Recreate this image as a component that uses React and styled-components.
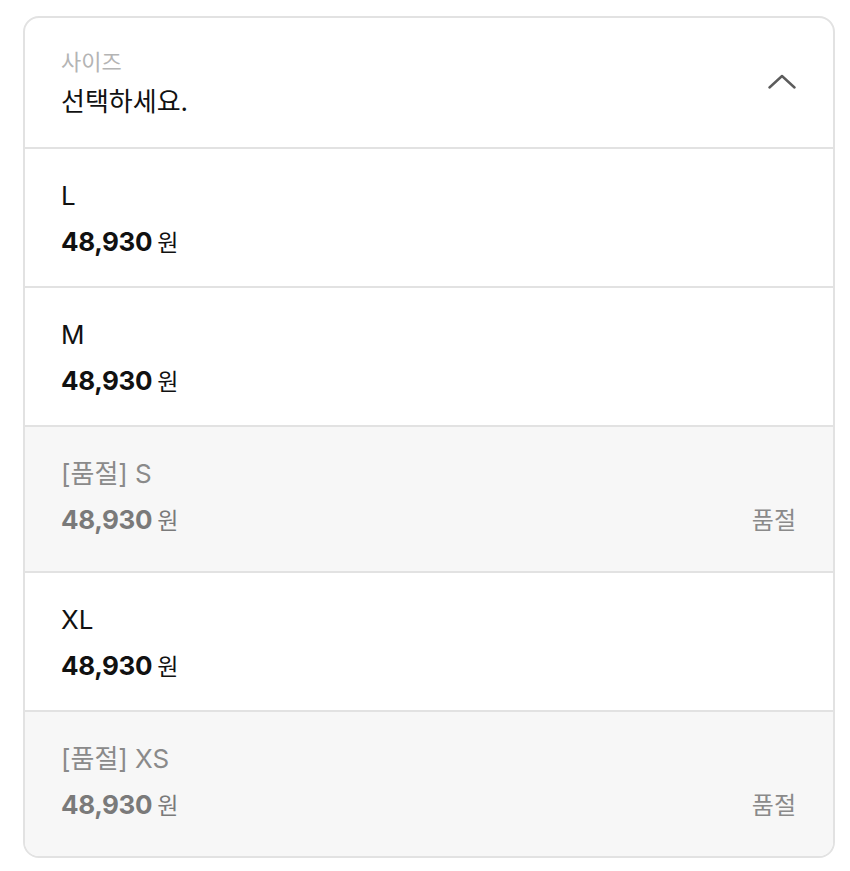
import React from "react";
import styled, { createGlobalStyle } from "styled-components";

const GlobalStyle = createGlobalStyle`
  html, body {
    margin: 0;
    padding: 0;
    background: #ffffff;
  }
  body {
    font-family: Inter, "Noto Sans CJK KR", "Noto Sans", sans-serif;
    color: #111111;
    -webkit-font-smoothing: antialiased;
  }
`;

const Page = styled.div`
  padding: 16px 15px 13px 23px;
`;

const Card = styled.div`
  width: 812px;
  box-sizing: border-box;
  border: 2px solid #e2e2e2;
  border-radius: 16px;
  overflow: hidden;
  background: #ffffff;
`;

const Header = styled.div`
  display: flex;
  align-items: center;
  justify-content: space-between;
  padding: 30px 37px 28px 36px;
`;

const HeaderText = styled.div`
  display: flex;
  flex-direction: column;
  gap: 9px;
`;

const Label = styled.span`
  font-size: 22px;
  line-height: 28px;
  color: #b4b4b4;
`;

const Placeholder = styled.span`
  font-size: 26px;
  line-height: 34px;
  color: #111111;
`;

const Chevron = styled.svg`
  width: 28px;
  height: 15px;
  flex: none;
  margin-top: -5px;
`;

const Option = styled.div`
  display: flex;
  align-items: flex-end;
  justify-content: space-between;
  border-top: 2px solid #e2e2e2;
  padding: 30px 37px ${(p) => (p.$soldOut ? "33px" : "26px")} 36px;
  background: ${(p) => (p.$soldOut ? "#f7f7f7" : "#ffffff")};
`;

const OptionText = styled.div`
  display: flex;
  flex-direction: column;
  gap: 12px;
`;

const OptionName = styled.span`
  font-size: 26px;
  line-height: 34px;
  color: ${(p) => (p.$soldOut ? "#8a8a8a" : "#111111")};
`;

const Price = styled.span`
  display: flex;
  align-items: baseline;
  line-height: 34px;
  color: ${(p) => (p.$soldOut ? "#7a7a7a" : "#111111")};
`;

const Amount = styled.span`
  font-size: 26px;
  font-weight: 700;
  letter-spacing: -0.4px;
`;

const Won = styled.span`
  font-size: 23px;
  margin-left: 5px;
  font-weight: 400;
`;

const SoldOutTag = styled.span`
  font-size: 24px;
  line-height: 34px;
  color: #8a8a8a;
`;

const options = [
  { name: "L", price: "48,930" },
  { name: "M", price: "48,930" },
  { name: "S", price: "48,930", soldOut: true },
  { name: "XL", price: "48,930" },
  { name: "XS", price: "48,930", soldOut: true },
];

export default function App() {
  return (
    <>
      <GlobalStyle />
      <Page>
        <Card>
          <Header>
            <HeaderText>
              <Label>사이즈</Label>
              <Placeholder>선택하세요.</Placeholder>
            </HeaderText>
            <Chevron viewBox="0 0 28 15" fill="none">
              <path
                d="M1.5 13.5 L14 2 L26.5 13.5"
                stroke="#5c5c5c"
                strokeWidth="2.4"
                strokeLinecap="round"
                strokeLinejoin="round"
              />
            </Chevron>
          </Header>
          {options.map((o) => (
            <Option key={o.name} $soldOut={o.soldOut}>
              <OptionText>
                <OptionName $soldOut={o.soldOut}>
                  {o.soldOut ? `[품절] ${o.name}` : o.name}
                </OptionName>
                <Price $soldOut={o.soldOut}>
                  <Amount>{o.price}</Amount>
                  <Won>원</Won>
                </Price>
              </OptionText>
              {o.soldOut && <SoldOutTag>품절</SoldOutTag>}
            </Option>
          ))}
        </Card>
      </Page>
    </>
  );
}
